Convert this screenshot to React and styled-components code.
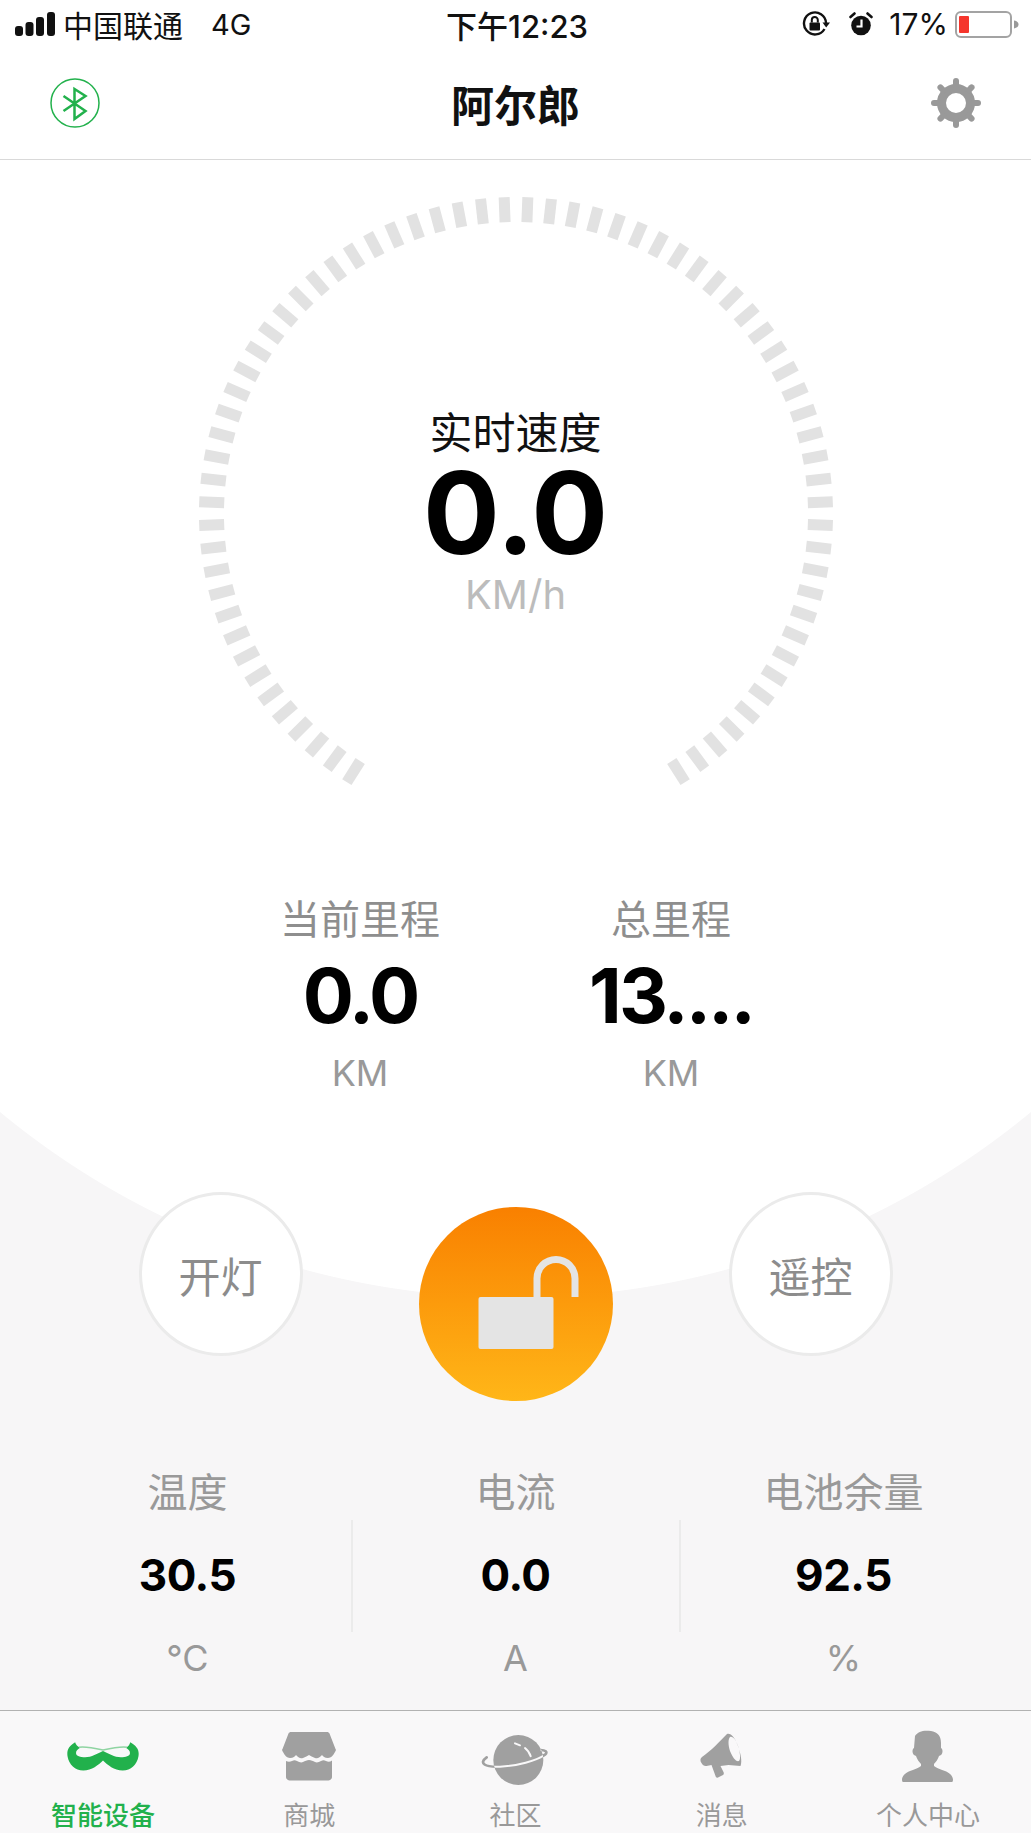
import React from 'react';
import styled, { createGlobalStyle } from 'styled-components';

const cjk = `Inter, "Noto Sans CJK SC", sans-serif`;

const GlobalStyle = createGlobalStyle`
  html, body { margin: 0; padding: 0; background: #fff; }
  body { font-family: ${cjk}; }
`;

const Page = styled.div`
  width: 1031px;
  height: 1833px;
  display: flex;
  flex-direction: column;
  overflow: hidden;
  background: radial-gradient(circle 809px at 515.5px 489px, #fff 99.9%, #f7f6f7 100%);
`;

const StatusBar = styled.div`
  height: 48px;
  display: grid;
  grid-template-columns: 1fr auto 1fr;
  align-items: center;
  padding: 0 12px 6px 15px;
  color: #111;
  font-size: 30px;
`;

const StatusLeft = styled.div`
  display: flex;
  align-items: center;
  gap: 8px;
`;

const Network = styled.span`
  margin-left: 20px;
  font-size: 29px;
`;

const Time = styled.div`
  font-size: 31px;
  font-weight: 500;
`;

const StatusRight = styled.div`
  display: flex;
  align-items: center;
  justify-content: flex-end;
`;

const StatusSlot = styled.span`
  display: flex;
  margin-left: ${p => p.$gap}px;
`;

const Header = styled.header`
  height: 98px;
  flex: none;
  display: grid;
  grid-template-columns: 1fr auto 1fr;
  align-items: center;
  padding: 0 50px 7px;
  border-bottom: 1px solid #d9d9d9;
`;

const HeaderSide = styled.div`
  display: flex;
  justify-content: ${p => (p.$end ? 'flex-end' : 'flex-start')};
`;

const Title = styled.h1`
  margin: 0;
  font-size: 43px;
  font-weight: 700;
  color: #111;
`;

const GaugeWrap = styled.section`
  display: grid;
  justify-items: center;
  padding-top: 37px;
  > * { grid-area: 1 / 1; }
`;

const GaugeText = styled.div`
  display: flex;
  flex-direction: column;
  align-items: center;
  padding-top: 208px;
`;

const GaugeLabel = styled.div`
  font-size: 43px;
  line-height: 56px;
  color: #111;
`;

const GaugeValue = styled.div`
  font-size: 114px;
  line-height: 103px;
  font-weight: 700;
  color: #000;
`;

const GaugeUnit = styled.div`
  font-size: 40px;
  line-height: 61px;
  color: #bcbcbc;
`;

const Mileage = styled.section`
  display: grid;
  grid-template-columns: 311px 311px;
  justify-content: center;
  margin-top: 62px;
`;

const MileItem = styled.div`
  display: flex;
  flex-direction: column;
  align-items: center;
`;

const MileLabel = styled.div`
  font-size: 40px;
  line-height: 54px;
  color: #8e8e8e;
`;

const MileValue = styled.div`
  font-size: 76px;
  line-height: 97px;
  font-weight: 700;
  letter-spacing: -3px;
  color: #000;
`;

const MileUnit = styled.div`
  font-size: 36px;
  line-height: 58px;
  color: #999;
`;

const Controls = styled.section`
  display: grid;
  grid-template-columns: 164px 194px 164px;
  justify-content: center;
  column-gap: 116px;
  align-items: start;
  margin-top: 90px;
`;

const RoundButton = styled.div`
  width: 164px;
  height: 164px;
  box-sizing: border-box;
  border-radius: 50%;
  border: 3px solid #ebebeb;
  background: #fff;
  display: flex;
  align-items: center;
  justify-content: center;
  font-size: 42px;
  color: #8c8c8c;
`;

const LockButton = styled.div`
  width: 194px;
  height: 194px;
  margin-top: 15px;
  border-radius: 50%;
  background: linear-gradient(180deg, #f98000 0%, #ffb618 100%);
  display: flex;
  align-items: center;
  justify-content: center;
`;

const Stats = styled.section`
  display: grid;
  grid-template-columns: repeat(3, 328px);
  justify-content: center;
  margin-top: 64px;
`;

const StatItem = styled.div`
  display: flex;
  flex-direction: column;
  align-items: center;
  position: relative;
  & + &::before {
    content: '';
    position: absolute;
    left: -1px;
    top: 55px;
    width: 2px;
    height: 112px;
    background: #ebebeb;
  }
`;

const StatLabel = styled.div`
  font-size: 40px;
  line-height: 56px;
  color: #999;
`;

const StatValue = styled.div`
  font-size: 44px;
  line-height: 109px;
  font-weight: 700;
  letter-spacing: -0.500px;
  color: #000;
`;

const StatUnit = styled.div`
  font-size: 36px;
  line-height: 56px;
  color: #999;
`;

const TabBar = styled.nav`
  margin-top: auto;
  height: 122px;
  flex: none;
  display: grid;
  grid-template-columns: repeat(5, 1fr);
  background: #f9f8f9;
  border-top: 1px solid #b2b2b2;
`;

const Tab = styled.div`
  display: flex;
  flex-direction: column;
  align-items: center;
  color: ${p => (p.$active ? '#22b14c' : '#999')};
  font-size: 26px;
  font-weight: ${p => (p.$active ? 500 : 400)};
`;

const TabIcon = styled.div`
  height: 90px;
  display: flex;
  align-items: center;
  justify-content: center;
`;

const TabLabel = styled.div`
  line-height: 30px;
  white-space: nowrap;
`;

const SignalIcon = () => (
  <svg width="40" height="24" viewBox="0 0 40 24">
    {[[0, 14, 10], [10.500, 10, 14], [21, 5, 19], [32, 0, 24]].map(([x, y, h]) => (
      <rect key={x} x={x} y={y} width="8" height={h} rx="3" fill="#111" />
    ))}
  </svg>
);

const RotationLockIcon = () => (
  <svg width="28" height="26" viewBox="0 0 28 26">
    <path d="M22.500 18a11 11 0 1 1 1.500-6" fill="none" stroke="#111" strokeWidth="2.400" />
    <path d="M20.500 11.500h7.500l-3.800 5z" fill="#111" />
    <rect x="7.500" y="11.500" width="10.500" height="8" rx="1" fill="#111" />
    <path d="M9.800 11.500V9a3 3 0 0 1 6 0v2.500" fill="none" stroke="#111" strokeWidth="2" />
  </svg>
);

const AlarmIcon = () => (
  <svg width="24" height="24" viewBox="0 0 24 24">
    <circle cx="12" cy="13.500" r="9.800" fill="#111" />
    <path d="M1.500 5 5.500 1.500M22.500 5 18.500 1.500" stroke="#111" strokeWidth="2.600" strokeLinecap="round" />
    <path d="M12.500 7.500v7H7.500" fill="none" stroke="#fff" strokeWidth="2.200" />
  </svg>
);

const BatteryIcon = () => (
  <svg width="64" height="27" viewBox="0 0 64 27">
    <rect x="1" y="1" width="55" height="25" rx="5" fill="none" stroke="#a3a3a3" strokeWidth="2" />
    <rect x="4" y="5" width="10" height="17" rx="1" fill="#f5352c" />
    <path d="M59 9.500c3 .5 4.500 2 4.500 4s-1.500 3.500-4.500 4z" fill="#999" />
  </svg>
);

const BluetoothIcon = () => (
  <svg width="50" height="50" viewBox="0 0 50 50">
    <circle cx="25" cy="25" r="24" fill="none" stroke="#22b14c" strokeWidth="1.500" />
    <path d="M13.500 18 35.500 33 24.500 41V11l11 7L13.500 33" fill="none" stroke="#22b14c" strokeWidth="2.500" />
  </svg>
);

const GearIcon = () => (
  <svg width="50" height="50" viewBox="0 0 50 50">
    <circle cx="25" cy="25" r="14.500" fill="none" stroke="#999" strokeWidth="9" />
    {[0, 45, 90, 135, 180, 225, 270, 315].map(a => (
      <rect key={a} x="22" y="0" width="6" height="10" rx="3" fill="#999" transform={`rotate(${a} 25 25)`} />
    ))}
  </svg>
);

const Gauge = () => {
  const ticks = [];
  const count = 70;
  const sweep = 147.75;
  const step = (sweep * 2) / (count - 1);
  for (let i = 0; i < count; i++) {
    ticks.push(-sweep + i * step);
  }
  return (
    <svg width="634" height="634" viewBox="0 0 634 634">
      {ticks.map(a => (
        <rect key={a} x="311.500" y="0" width="11" height="25" fill="#e2e2e2" transform={`rotate(${a} 317 317)`} />
      ))}
    </svg>
  );
};

const LockIcon = () => (
  <svg width="130" height="110" viewBox="0 0 130 110">
    <rect x="27.500" y="48" width="75" height="52" rx="2" fill="#e4e4e4" />
    <path d="M86 48V29.500a19 19 0 0 1 38 0V48" fill="none" stroke="#e4e4e4" strokeWidth="7" />
  </svg>
);

const MustacheIcon = () => (
  <svg width="72" height="32" viewBox="20 15 230 102">
    <path
      d="M46 22C26 34 18 48 22 68 26 92 46 112 72 112 100 112 120 94 135 80 150 94 170 112 198 112 224 112 244 92 248 68 252 48 244 34 222 22 220 30 216 36 208 40 218 46 222 52 221 58 220 66 208 70 192 70 172 70 152 58 135 50 118 58 98 70 78 70 62 70 50 66 49 58 48 52 52 46 62 40 54 36 48 30 46 22Z"
      fill="#22b14c"
    />
    <path d="M58 38C75 35 100 39 135 47 170 39 195 35 212 38" fill="none" stroke="#8fd4a2" strokeWidth="5" />
  </svg>
);

const StoreIcon = () => (
  <svg width="54" height="50" viewBox="0 0 54 50">
    <path d="M9 1c-1 0-2 .5-2.500 1.500L.5 18c-1 1 0 2 .5 3 1.500 3 4 6 7 6 3.500 0 5-2 6-3 2 2 4 4 7 3 2.500-1 4.500-2 6-3 1.500 1 3.500 2 6 3 3 1 5-1 7-3 1 1 2.500 3 6 3 3 0 5.500-3 7-6 .5-1 1.500-2 .5-3L47.500 2.500C47 1.500 46 1 45 1z" fill="#a0a0a0" />
    <path d="M4 30c2 1 4 1 6 0s3-1 5 0 4 2 6 1 4-2 6-2 4 1 6 2 4 0 6-1 3-1 5 0 4 1 6-.5V46c0 2-2 3.500-3.500 3.500H7.500C6 49.500 4 48 4 46z" fill="#a0a0a0" />
  </svg>
);

const PlanetIcon = () => {
  const ring = 'M50 100C25 118 45 130 90 128 140 126 200 110 225 92 235 84 225 78 212 78';
  return (
    <svg width="90" height="65" viewBox="0 0 270 195">
      <defs>
        <clipPath id="planet-body">
          <circle cx="145" cy="108" r="75" />
        </clipPath>
      </defs>
      <path d={ring} fill="none" stroke="#a0a0a0" strokeWidth="8" strokeLinecap="round" />
      <circle cx="145" cy="108" r="75" fill="#a0a0a0" />
      <path d={ring} fill="none" stroke="#f9f8f9" strokeWidth="6" clipPath="url(#planet-body)" />
      <path d="M135 58 150 64M165 72C175 80 180 90 182 97" fill="none" stroke="#f9f8f9" strokeWidth="6" strokeLinecap="round" />
    </svg>
  );
};

const MegaphoneIcon = () => (
  <svg width="44" height="46" viewBox="0 0 44 46">
    <path d="M27 1C20 8 11 18 2 24c-2 1.500-2 4-.5 6 1 2 3 3.500 5 3l5-1 4 11c.5 2 2 2 3.500 1l4-2c1-.5 1-2 .5-3l-3-6 8-1 12 1c2-5 0-13-3-21S31 0 27 1zM30 4c3-1 6 3 8 9 2 6 3 13 1 15-3 1-6-3-9-10-2-6-2-12 0-14z" fill="#a0a0a0" fillRule="evenodd" />
  </svg>
);

const PersonIcon = () => (
  <svg width="54" height="52" viewBox="0 0 54 52">
    <path d="M14 6c3-5 9-6 16-5 6 1 10 4 10 12v5c2 1 2 5 0 7l-2 1c-1 3-3 6-5 8v2c2 2 6 3 11 5 5 2 8 5 8 9 0 1.500-1 2.500-2 2.500H3c-1 0-2-1-2-2.500 0-4 3-7 8-9 5-2 9-3 11-5v-2c-2-2-4-5-5-8l-2-1c-2-2-2-6 0-7z" fill="#a0a0a0" />
  </svg>
);

const tabs = [
  { label: '智能设备', Icon: MustacheIcon, active: true },
  { label: '商城', Icon: StoreIcon },
  { label: '社区', Icon: PlanetIcon },
  { label: '消息', Icon: MegaphoneIcon },
  { label: '个人中心', Icon: PersonIcon },
];

const stats = [
  { label: '温度', value: '30.5', unit: '°C' },
  { label: '电流', value: '0.0', unit: 'A' },
  { label: '电池余量', value: '92.5', unit: '%' },
];

const miles = [
  { label: '当前里程', value: '0.0', unit: 'KM' },
  { label: '总里程', value: '13....', unit: 'KM' },
];

export default function App() {
  return (
    <Page>
      <GlobalStyle />
      <StatusBar>
        <StatusLeft>
          <SignalIcon />
          <span>中国联通</span>
          <Network>4G</Network>
        </StatusLeft>
        <Time>下午12:23</Time>
        <StatusRight>
          <RotationLockIcon />
          <StatusSlot $gap={19}><AlarmIcon /></StatusSlot>
          <StatusSlot $gap={16}>17%</StatusSlot>
          <StatusSlot $gap={7}><BatteryIcon /></StatusSlot>
        </StatusRight>
      </StatusBar>
      <Header>
        <HeaderSide><BluetoothIcon /></HeaderSide>
        <Title>阿尔郎</Title>
        <HeaderSide $end><GearIcon /></HeaderSide>
      </Header>
      <GaugeWrap>
        <Gauge />
        <GaugeText>
          <GaugeLabel>实时速度</GaugeLabel>
          <GaugeValue>0.0</GaugeValue>
          <GaugeUnit>KM/h</GaugeUnit>
        </GaugeText>
      </GaugeWrap>
      <Mileage>
        {miles.map(m => (
          <MileItem key={m.label}>
            <MileLabel>{m.label}</MileLabel>
            <MileValue>{m.value}</MileValue>
            <MileUnit>{m.unit}</MileUnit>
          </MileItem>
        ))}
      </Mileage>
      <Controls>
        <RoundButton>开灯</RoundButton>
        <LockButton><LockIcon /></LockButton>
        <RoundButton>遥控</RoundButton>
      </Controls>
      <Stats>
        {stats.map(s => (
          <StatItem key={s.label}>
            <StatLabel>{s.label}</StatLabel>
            <StatValue>{s.value}</StatValue>
            <StatUnit>{s.unit}</StatUnit>
          </StatItem>
        ))}
      </Stats>
      <TabBar>
        {tabs.map(({ label, Icon, active }) => (
          <Tab key={label} $active={active}>
            <TabIcon><Icon /></TabIcon>
            <TabLabel>{label}</TabLabel>
          </Tab>
        ))}
      </TabBar>
    </Page>
  );
}
